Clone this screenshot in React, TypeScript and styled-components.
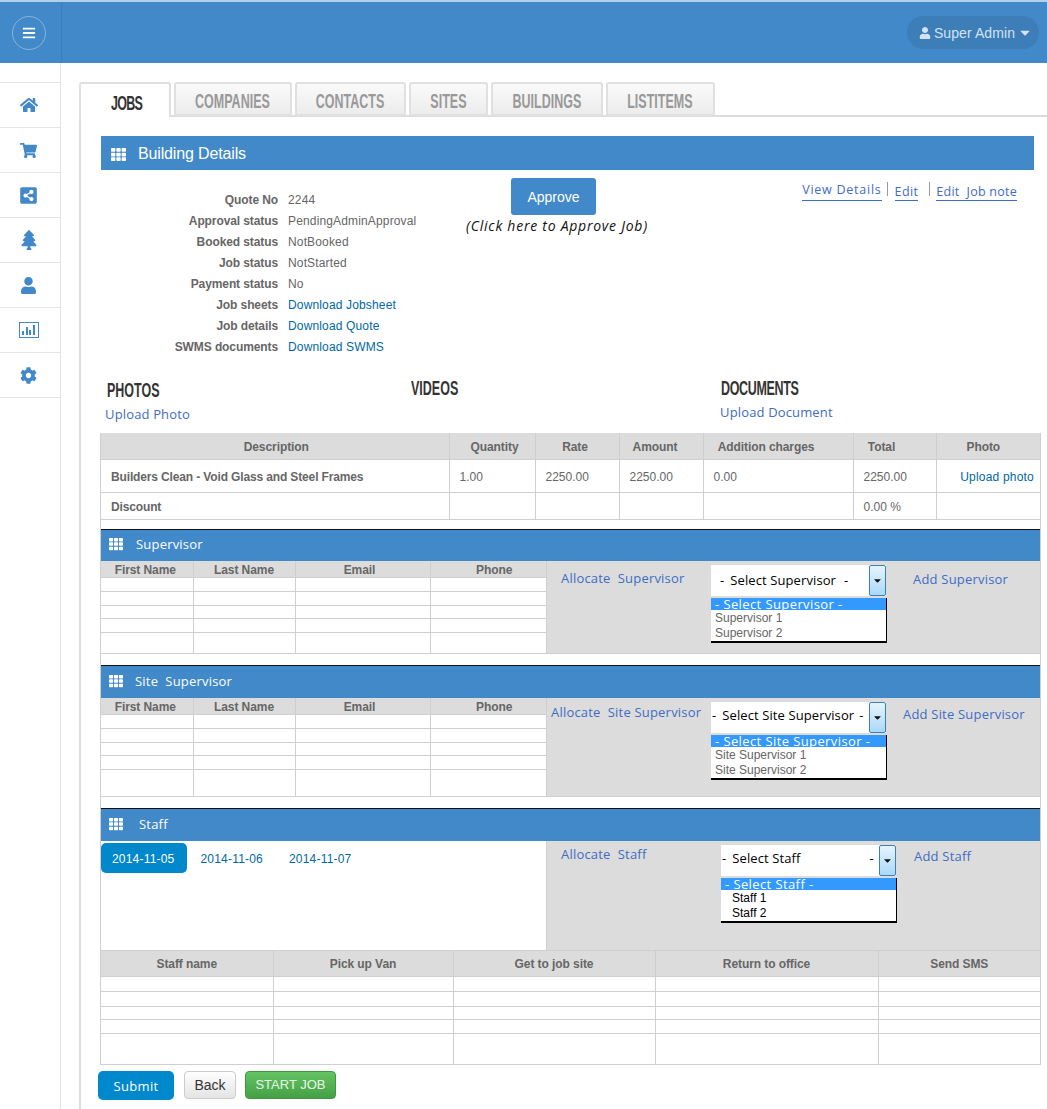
import React, { FunctionComponent, ReactNode } from 'react';
import styled, { createGlobalStyle } from 'styled-components';
import {
  FaBars,
  FaCaretDown,
  FaCog,
  FaHome,
  FaShareAltSquare,
  FaShoppingCart,
  FaTh,
  FaTree,
  FaUser,
} from 'react-icons/fa';

const BLUE = '#4289c9';
const LINE = '#cfcfcf';
const GRAY = '#dcdcdc';
const SANS = '"Liberation Sans", Arial, sans-serif';
const OPEN = '"Open Sans", "Liberation Sans", sans-serif';

const GlobalStyle = createGlobalStyle`
  html, body {
    margin: 0;
    padding: 0;
    height: 1109px;
    overflow: hidden;
    background: #fff;
    font-family: ${SANS};
    font-size: 12px;
    color: #666;
  }
  * { box-sizing: border-box; }
`;

const Header = styled.header`
  display: flex;
  align-items: stretch;
  height: 63px;
  background: ${BLUE};
  border-top: 2px solid #b5cfe8;
`;

const MenuCell = styled.div`
  display: flex;
  align-items: center;
  justify-content: center;
  width: 62px;
  padding-right: 4px;
  border-right: 1px solid #3d7db8;
`;

const MenuButton = styled.div`
  display: flex;
  align-items: center;
  justify-content: center;
  width: 34px;
  height: 34px;
  border: 1px solid rgba(255, 255, 255, 0.35);
  border-radius: 50%;
  color: #fff;
  font-size: 14px;
`;

const UserPill = styled.div`
  display: flex;
  align-items: center;
  gap: 3px;
  height: 33px;
  margin: 14px 8px 0 auto;
  padding: 0 7px 0 12px;
  border-radius: 17px;
  background: #3d7db8;
  color: #d3e3f2;
  font-size: 14px;
  letter-spacing: 0.08px;
`;

const CaretSlot = styled.span`
  display: flex;
  width: 14px;
  justify-content: center;
`;

const Body = styled.div`
  display: flex;
  height: 1046px;
`;

const Sidebar = styled.nav`
  flex: 0 0 61px;
  padding-top: 19px;
  border-right: 1px solid #e5e5e5;
`;

const SideItem = styled.div`
  display: flex;
  align-items: center;
  justify-content: center;
  height: 45px;
  padding-right: 3px;
  border-top: 1px solid #e5e5e5;
  color: ${BLUE};

  &:last-child {
    border-bottom: 1px solid #e5e5e5;
    height: 46px;
  }
`;

const Main = styled.main`
  flex: 1;
  min-width: 0;
  padding: 19px 0 0 18px;
`;

const TabBar = styled.div`
  display: flex;
  gap: 3px;
  height: 35px;
  border-bottom: 2px solid #ddd;
`;

const Tab = styled.div<{ $active?: boolean }>`
  display: flex;
  align-items: center;
  height: ${(p) => (p.$active ? 35 : 34)}px;
  padding: 6px ${(p) => (p.$active ? 27 : 20)}px 0 ${(p) => (p.$active ? 30 : 19)}px;
  border: 2px solid #e0e0e0;
  border-bottom: ${(p) => (p.$active ? 0 : '')};
  border-radius: 3px 3px 0 0;
  background: ${(p) => (p.$active ? '#fff' : 'linear-gradient(#fafafa, #ececec)')};
  color: ${(p) => (p.$active ? '#333' : '#999')};
`;

const Display = styled.span<{ $spacing?: number }>`
  display: inline-block;
  font-family: ${SANS};
  font-size: 12.5px;
  font-weight: bold;
  letter-spacing: ${(p) => p.$spacing ?? 0}px;
  line-height: 14px;
  white-space: nowrap;
  transform: scaleY(1.55);
`;

const Pane = styled.div`
  height: 993px;
  padding: 19px 0 0 19px;
  border-left: 2px solid #ddd;
`;

const TitleBar = styled.div`
  display: flex;
  align-items: center;
  gap: 12px;
  width: 933px;
  height: 34px;
  margin-left: 1px;
  padding: 2px 0 0 10px;
  background: ${BLUE};
  color: #fff;
  font-size: 16px;
  letter-spacing: -0.15px;
`;

const Summary = styled.div`
  display: flex;
  height: 208px;
`;

const Facts = styled.dl`
  display: grid;
  grid-template-columns: 178px auto;
  grid-auto-rows: 21px;
  column-gap: 10px;
  align-items: center;
  align-content: start;
  width: 366px;
  margin: 0;
  padding-top: 19px;
`;

const FactLabel = styled.dt`
  font-weight: bold;
  letter-spacing: -0.1px;
  text-align: right;
`;

const FactValue = styled.dd`
  margin: 0;
  letter-spacing: 0.15px;
  white-space: nowrap;
`;

const TextLink = styled.a`
  color: #0068a5;
`;

const ApproveCol = styled.div`
  width: 182px;
  padding-top: 8px;
`;

const ApproveButton = styled.div`
  display: flex;
  align-items: center;
  justify-content: center;
  width: 85px;
  height: 37px;
  margin-left: 45px;
  border-radius: 3px;
  background: ${BLUE};
  color: #fff;
  font-size: 14px;
`;

const ApproveHint = styled.div`
  margin-top: 2px;
  color: #111;
  font-family: ${OPEN};
  font-size: 14px;
  font-style: italic;
  letter-spacing: 0.75px;
  line-height: 18px;
  white-space: nowrap;
`;

const JobLinks = styled.div`
  display: flex;
  align-items: flex-start;
  margin-left: auto;
  padding: 12px 30px 0 0;
`;

const JobLink = styled.a<{ $drop?: number; $spacing?: number }>`
  height: 19px;
  padding-top: ${(p) => p.$drop ?? 0}px;
  border-bottom: 1px solid #3f6cc4;
  color: #3f6cc4;
  font-family: ${OPEN};
  font-size: 12.5px;
  letter-spacing: ${(p) => p.$spacing ?? 0.4}px;
  line-height: 16px;
  white-space: pre;
`;

const LinkSep = styled.span<{ $lead: number; $gap: number }>`
  width: 1px;
  height: 14px;
  margin: 0 ${(p) => p.$gap}px 0 ${(p) => p.$lead}px;
  background: #999;
`;

const MediaRow = styled.div`
  display: flex;
  height: 55px;
`;

const MediaCol = styled.div<{ $top: number; $pad: number }>`
  width: 310px;
  padding: ${(p) => p.$top}px 0 0 ${(p) => p.$pad}px;
  color: #333;
`;

const UploadLink = styled.a<{ $shift?: number }>`
  display: block;
  margin: 7px 0 0 ${(p) => p.$shift ?? -2}px;
  color: #3f6cc4;
  font-family: ${OPEN};
  font-size: 13px;
  letter-spacing: 0.15px;
  line-height: 18px;
`;

const Sheet = styled.div`
  width: 941px;
  height: 632px;
  border-left: 1px solid ${LINE};
  border-right: 1px solid ${LINE};
`;

const Grid = styled.table<{ $width: number }>`
  width: ${(p) => p.$width}px;
  border-collapse: collapse;
  table-layout: fixed;

  th,
  td {
    padding: 0;
    border: 1px solid ${LINE};
  }

  th:first-child,
  td:first-child {
    border-left: 0;
  }

  th:last-child,
  td:last-child {
    border-right: 0;
  }

  thead th {
    border-top: 0;
  }
`;

const HeadRow = styled.tr<{ $h: number }>`
  height: ${(p) => p.$h}px;
`;

// $shift moves the label off the column centre: positive right, negative left
const HeadCell = styled.th<{ $shift?: number }>`
  padding: 2px ${(p) => Math.max(-(p.$shift ?? 0), 0)}px 0 ${(p) => Math.max(p.$shift ?? 0, 0)}px !important;
  background: ${GRAY};
  color: #666;
  font-size: 12px;
  font-weight: bold;
  letter-spacing: -0.08px;
  line-height: 14px;
  white-space: nowrap;
`;

const Row = styled.tr<{ $h: number }>`
  height: ${(p) => p.$h}px;
`;

const Cell = styled.td<{ $bold?: boolean; $right?: boolean }>`
  padding: 2px 0 0 10px !important;
  font-weight: ${(p) => (p.$bold ? 'bold' : 'normal')};
  letter-spacing: ${(p) => (p.$bold ? -0.14 : 0)}px;
  text-align: ${(p) => (p.$right ? 'right' : 'left')};
  white-space: nowrap;
`;

const PhotoLink = styled(TextLink)`
  display: block;
  padding-right: 6px;
  letter-spacing: 0.2px;
`;

const SectionBar = styled.div<{ $gap: number; $top: number; $h: number }>`
  display: flex;
  align-items: center;
  gap: ${(p) => p.$gap}px;
  height: ${(p) => p.$h}px;
  margin-top: ${(p) => p.$top}px;
  padding: 0 0 2px 8px;
  border-top: 1px solid #111;
  background: ${BLUE};
  color: #fff;
  font-family: ${OPEN};
  font-size: 13px;
  letter-spacing: 0.2px;
  white-space: pre;
`;

const SectionBody = styled.div`
  display: flex;
`;

const AssignPanel = styled.div`
  display: flex;
  flex: 1;
  align-items: flex-start;
  border-left: 1px solid ${LINE};
  border-bottom: 1px solid ${LINE};
  background: ${GRAY};
`;

const AssignLabel = styled.a<{ $width: number; $pad: number; $top: number }>`
  flex: 0 0 ${(p) => p.$width}px;
  margin-top: ${(p) => p.$top}px;
  padding-left: ${(p) => p.$pad}px;
  color: #3f6cc4;
  font-family: ${OPEN};
  font-size: 13px;
  letter-spacing: 0.2px;
  line-height: 18px;
  white-space: pre;
`;

const AddLink = styled(AssignLabel)`
  flex: 0 0 auto;
  padding-left: 0;
  margin-left: ${(p) => p.$pad}px;
`;

const SelectWrap = styled.div`
  flex: 0 0 176px;
  padding-top: 4px;
`;

const SelectBox = styled.div`
  display: flex;
  height: 31px;
  width: 175px;
  background: #fff;
`;

const SelectValue = styled.div<{ $pad: number; $tail: number; $lift: number }>`
  display: flex;
  flex: 1;
  align-items: center;
  gap: 6px;
  padding: 0 0 ${(p) => p.$lift}px ${(p) => p.$pad}px;
  color: #000;
  font-family: ${OPEN};
  font-size: 13px;
  letter-spacing: 0.1px;
  white-space: nowrap;

  span:last-child {
    margin-left: ${(p) => p.$tail}px;
  }
`;

const SelectArrow = styled.div`
  display: flex;
  align-items: center;
  justify-content: center;
  flex: 0 0 17px;
  border: 1px solid #3d7fb8;
  border-radius: 2px;
  background: linear-gradient(#e6f4fd, #a9d9f8);
  color: #111;
  font-size: 11px;
`;

const OptionList = styled.div`
  width: 176px;
  height: 45px;
  margin-top: 2px;
  border-right: 1px solid #000;
  border-bottom: 2px solid #000;
  background: #fff;
  font-size: 12px;
`;

const OptionPicked = styled.div`
  height: 12px;
  padding-left: 4px;
  background: #3399ff;
  color: #fff;
  font-family: ${OPEN};
  font-size: 13px;
  letter-spacing: 0.4px;
  line-height: 12px;
  white-space: nowrap;
`;

const Option = styled.div<{ $dark?: boolean }>`
  height: 15px;
  padding-left: ${(p) => (p.$dark ? 11 : 4)}px;
  color: ${(p) => (p.$dark ? '#000' : '#666')};
  line-height: 16px;
`;

const DatesPanel = styled.div`
  display: flex;
  align-items: flex-start;
  width: 445px;
  height: 110px;
  padding-top: 2px;
  border-bottom: 1px solid ${LINE};
`;

const DatePill = styled.a<{ $active?: boolean }>`
  height: 30px;
  padding: 0 12px 0 ${(p) => (p.$active ? 11 : 14)}px;
  border-radius: 5px;
  background: ${(p) => (p.$active ? '#0088cc' : 'transparent')};
  color: ${(p) => (p.$active ? '#fff' : '#0068a5')};
  letter-spacing: 0.2px;
  line-height: 32px;
`;

const Actions = styled.div`
  display: flex;
  align-items: flex-start;
  margin: 6px 0 0 -2px;
`;

const SubmitButton = styled.div`
  width: 76px;
  height: 29px;
  border-radius: 5px;
  background: #0088cc;
  color: #fff;
  font-family: ${OPEN};
  font-size: 13px;
  letter-spacing: 0.3px;
  line-height: 30px;
  text-align: center;
`;

const BackButton = styled.div`
  width: 52px;
  height: 28px;
  margin-left: 10px;
  border: 1px solid #ccc;
  border-radius: 4px;
  background: linear-gradient(#fff, #e4e4e4);
  color: #333;
  font-size: 14px;
  line-height: 26px;
  text-align: center;
`;

const StartButton = styled.div`
  width: 91px;
  height: 28px;
  margin-left: 9px;
  border: 1px solid #419641;
  border-radius: 4px;
  background: linear-gradient(#62c462, #46a046);
  color: #e8f5e8;
  font-size: 13px;
  line-height: 26px;
  text-align: center;
`;

const ChartIcon = () => (
  <svg width='20' height='16' viewBox='0 0 20 16' fill='currentColor'>
    <rect x='0.5' y='0.5' width='19' height='15' fill='none' stroke='currentColor' />
    <rect x='3' y='9' width='2' height='4' />
    <rect x='7' y='5' width='2' height='8' />
    <rect x='10' y='8' width='2' height='5' />
    <rect x='14' y='3' width='2' height='10' />
  </svg>
);

const facts: [string, string, boolean?][] = [
  ['Quote No', '2244'],
  ['Approval status', 'PendingAdminApproval'],
  ['Booked status', 'NotBooked'],
  ['Job status', 'NotStarted'],
  ['Payment status', 'No'],
  ['Job sheets', 'Download Jobsheet', true],
  ['Job details', 'Download Quote', true],
  ['SWMS documents', 'Download SWMS', true],
];

const navIcons = [
  <FaHome key='home' size={18} />,
  <FaShoppingCart key='cart' size={17} />,
  <FaShareAltSquare key='share' size={19} />,
  <FaTree key='tree' size={20} />,
  <FaUser key='user' size={17} />,
  <ChartIcon key='chart' />,
  <FaCog key='cog' size={17} />,
];

const tabs = ['COMPANIES', 'CONTACTS', 'SITES', 'BUILDINGS', 'LISTITEMS'];

type Heading = [string, number?];

interface BlankTableProps {
  width: number;
  cols: number[];
  head: Heading[];
  headHeight: number;
  rows: number[];
}

const BlankTable: FunctionComponent<BlankTableProps> = ({ width, cols, head, headHeight, rows }) => (
  <Grid $width={width}>
    <colgroup>
      {cols.map((c, i) => (
        <col key={i} width={c} />
      ))}
    </colgroup>
    <thead>
      <HeadRow $h={headHeight}>
        {head.map(([label, shift]) => (
          <HeadCell key={label} $shift={shift}>
            {label}
          </HeadCell>
        ))}
      </HeadRow>
    </thead>
    <tbody>
      {rows.map((h, i) => (
        <Row key={i} $h={h}>
          {head.map(([label]) => (
            <td key={label} />
          ))}
        </Row>
      ))}
    </tbody>
  </Grid>
);

interface PickerProps {
  title: string;
  options: string[];
  pad: number;
  tail: number;
  lift: number;
  dark?: boolean;
}

const Picker: FunctionComponent<PickerProps> = ({ title, options, pad, tail, lift, dark }) => (
  <SelectWrap>
    <SelectBox>
      <SelectValue $pad={pad} $tail={tail} $lift={lift}>
        <span>-</span>
        <span>{title}</span>
        <span>-</span>
      </SelectValue>
      <SelectArrow>
        <FaCaretDown />
      </SelectArrow>
    </SelectBox>
    <OptionList>
      <OptionPicked>- {title} -</OptionPicked>
      {options.map((o) => (
        <Option key={o} $dark={dark}>
          {o}
        </Option>
      ))}
    </OptionList>
  </SelectWrap>
);

const PEOPLE_COLS = [92, 102, 135, 116];
const PEOPLE_HEAD: Heading[] = [['First Name', -3], ['Last Name'], ['Email', -6], ['Phone', 12]];
const MAIN_HEAD: Heading[] = [
  ['Description', 3],
  ['Quantity', 5],
  ['Rate', -4],
  ['Amount', -12],
  ['Addition charges', -24],
  ['Total', -26],
  ['Photo', -10],
];
const STAFF_HEAD: Heading[] = [
  ['Staff name'],
  ['Pick up Van'],
  ['Get to job site'],
  ['Return to office'],
  ['Send SMS'],
];

interface SectionProps {
  title: string;
  gap: number;
  top: number;
  height: number;
  children: ReactNode;
}

const Section: FunctionComponent<SectionProps> = ({ title, gap, top, height, children }) => (
  <>
    <SectionBar $gap={gap} $top={top} $h={height}>
      <FaTh size={14} />
      {title}
    </SectionBar>
    {children}
  </>
);

export default function App() {
  return (
    <>
      <GlobalStyle />
      <Header>
        <MenuCell>
          <MenuButton>
            <FaBars />
          </MenuButton>
        </MenuCell>
        <UserPill>
          <FaUser size={12} />
          Super Admin
          <CaretSlot>
            <FaCaretDown size={15} />
          </CaretSlot>
        </UserPill>
      </Header>
      <Body>
        <Sidebar>
          {navIcons.map((icon) => (
            <SideItem key={icon.key}>{icon}</SideItem>
          ))}
        </Sidebar>
        <Main>
          <TabBar>
            <Tab $active>
              <Display $spacing={-0.75}>JOBS</Display>
            </Tab>
            {tabs.map((t) => (
              <Tab key={t}>
                <Display>{t}</Display>
              </Tab>
            ))}
          </TabBar>
          <Pane>
            <TitleBar>
              <FaTh size={15} />
              Building Details
            </TitleBar>
            <Summary>
              <Facts>
                {facts.map(([label, value, link]) => (
                  <React.Fragment key={label}>
                    <FactLabel>{label}</FactLabel>
                    <FactValue>{link ? <TextLink>{value}</TextLink> : value}</FactValue>
                  </React.Fragment>
                ))}
              </Facts>
              <ApproveCol>
                <ApproveButton>Approve</ApproveButton>
                <ApproveHint>(Click here to Approve Job)</ApproveHint>
              </ApproveCol>
              <JobLinks>
                <JobLink $spacing={0.75}>View Details</JobLink>
                <LinkSep $lead={5} $gap={7} />
                <JobLink $drop={2}>Edit</JobLink>
                <LinkSep $lead={11} $gap={6} />
                <JobLink $drop={2} $spacing={0.25}>
                  Edit  Job note
                </JobLink>
              </JobLinks>
            </Summary>
            <MediaRow>
              <MediaCol $top={6} $pad={7}>
                <Display>PHOTOS</Display>
                <UploadLink>Upload Photo</UploadLink>
              </MediaCol>
              <MediaCol $top={4} $pad={1}>
                <Display>VIDEOS</Display>
              </MediaCol>
              <MediaCol $top={4} $pad={1}>
                <Display $spacing={-0.33}>DOCUMENTS</Display>
                <UploadLink $shift={-1}>Upload Document</UploadLink>
              </MediaCol>
            </MediaRow>
            <Sheet>
              <Grid $width={939}>
                <colgroup>
                  {[348, 86, 84, 84, 150, 83, 104].map((c, i) => (
                    <col key={i} width={c} />
                  ))}
                </colgroup>
                <thead>
                  <HeadRow $h={26}>
                    {MAIN_HEAD.map(([label, shift]) => (
                      <HeadCell key={label} $shift={shift}>
                        {label}
                      </HeadCell>
                    ))}
                  </HeadRow>
                </thead>
                <tbody>
                  <Row $h={33}>
                    <Cell $bold>Builders Clean - Void Glass and Steel Frames</Cell>
                    <Cell>1.00</Cell>
                    <Cell>2250.00</Cell>
                    <Cell>2250.00</Cell>
                    <Cell>0.00</Cell>
                    <Cell>2250.00</Cell>
                    <Cell $right>
                      <PhotoLink>Upload photo</PhotoLink>
                    </Cell>
                  </Row>
                  <Row $h={27}>
                    <Cell $bold>Discount</Cell>
                    <Cell />
                    <Cell />
                    <Cell />
                    <Cell />
                    <Cell>0.00 %</Cell>
                    <Cell />
                  </Row>
                </tbody>
              </Grid>
              <Section title='Supervisor' gap={13} top={9} height={32}>
                <SectionBody>
                  <BlankTable width={445} cols={PEOPLE_COLS} head={PEOPLE_HEAD} headHeight={16} rows={[14, 14, 13, 14, 21]} />
                  <AssignPanel>
                    <AssignLabel $width={164} $pad={14} $top={8}>
                      Allocate  Supervisor
                    </AssignLabel>
                    <Picker title='Select Supervisor' options={['Supervisor 1', 'Supervisor 2']} pad={9} tail={2} lift={0} />
                    <AddLink $width={0} $pad={26} $top={9}>
                      Add Supervisor
                    </AddLink>
                  </AssignPanel>
                </SectionBody>
              </Section>
              <Section title='Site  Supervisor' gap={12} top={11} height={33}>
                <SectionBody>
                  <BlankTable width={445} cols={PEOPLE_COLS} head={PEOPLE_HEAD} headHeight={16} rows={[14, 14, 13, 14, 27]} />
                  <AssignPanel>
                    <AssignLabel $width={164} $pad={4} $top={5}>
                      Allocate  Site Supervisor
                    </AssignLabel>
                    <Picker title='Select Site Supervisor' options={['Site Supervisor 1', 'Site Supervisor 2']} pad={1} tail={-1} lift={4} />
                    <AddLink $width={0} $pad={16} $top={7}>
                      Add Site Supervisor
                    </AddLink>
                  </AssignPanel>
                </SectionBody>
              </Section>
              <Section title='Staff' gap={16} top={11} height={33}>
                <SectionBody>
                  <DatesPanel>
                    <DatePill $active>2014-11-05</DatePill>
                    <DatePill>2014-11-06</DatePill>
                    <DatePill>2014-11-07</DatePill>
                  </DatesPanel>
                  <AssignPanel>
                    <AssignLabel $width={174} $pad={14} $top={4}>
                      Allocate  Staff
                    </AssignLabel>
                    <Picker title='Select Staff' options={['Staff 1', 'Staff 2']} pad={1} tail={63} lift={5} dark />
                    <AddLink $width={0} $pad={17} $top={6}>
                      Add Staff
                    </AddLink>
                  </AssignPanel>
                </SectionBody>
              </Section>
              <BlankTable
                width={939}
                cols={[172, 180, 202, 223, 162]}
                head={STAFF_HEAD}
                headHeight={26}
                rows={[15, 15, 13, 14, 31]}
              />
            </Sheet>
            <Actions>
              <SubmitButton>Submit</SubmitButton>
              <BackButton>Back</BackButton>
              <StartButton>START JOB</StartButton>
            </Actions>
          </Pane>
        </Main>
      </Body>
    </>
  );
}
